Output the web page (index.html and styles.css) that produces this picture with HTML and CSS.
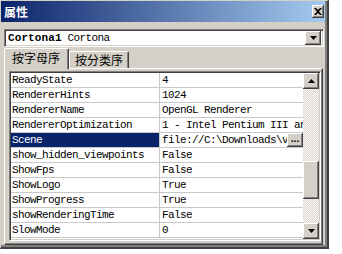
FILE: index.html
```html
<!DOCTYPE html>
<html>
<head>
<meta charset="utf-8">
<link rel="stylesheet" href="styles.css">
</head>
<body>
<div class="window">
  <div class="titlebar">
    <span class="title">属性</span>
    <span class="close"><svg width="8" height="7" viewBox="0 0 8 7"><path d="M0 0h2l2 2 2-2h2L5 3.5 8 7H6L4 5 2 7H0l3-3.5z" fill="#000"/></svg></span>
  </div>
  <div class="combo">
    <span class="combo-text"><b>Cortona1</b> Cortona</span>
    <span class="btn3d combo-btn"><svg width="7" height="4" viewBox="0 0 7 4"><path d="M0 0h7L3.5 4z" fill="#000"/></svg></span>
  </div>
  <div class="tabs">
    <div class="tab active">按字母序</div>
    <div class="tab">按分类序</div>
  </div>
  <div class="tabpage">
    <div class="grid">
      <div class="rows">
        <div class="row"><div class="name">ReadyState</div><div class="value">4</div></div>
        <div class="row"><div class="name">RendererHints</div><div class="value">1024</div></div>
        <div class="row"><div class="name">RendererName</div><div class="value">OpenGL Renderer</div></div>
        <div class="row"><div class="name">RendererOptimization</div><div class="value">1 - Intel Pentium III and above</div></div>
        <div class="row selected"><div class="name">Scene</div><div class="value"><span class="vtext">file://C:\Downloads\vrml\scene.wrl</span><span class="btn3d dots">...</span></div></div>
        <div class="row"><div class="name">show_hidden_viewpoints</div><div class="value">False</div></div>
        <div class="row"><div class="name">ShowFps</div><div class="value">False</div></div>
        <div class="row"><div class="name">ShowLogo</div><div class="value">True</div></div>
        <div class="row"><div class="name">ShowProgress</div><div class="value">True</div></div>
        <div class="row"><div class="name">showRenderingTime</div><div class="value">False</div></div>
        <div class="row"><div class="name">SlowMode</div><div class="value">0</div></div>
      </div>
      <div class="scrollbar">
        <span class="btn3d sbtn"><svg width="7" height="4" viewBox="0 0 7 4"><path d="M0 4h7L3.5 0z" fill="#000"/></svg></span>
        <div class="track"><div class="btn3d thumb"></div></div>
        <span class="btn3d sbtn"><svg width="7" height="4" viewBox="0 0 7 4"><path d="M0 0h7L3.5 4z" fill="#000"/></svg></span>
      </div>
    </div>
  </div>
</div>
</body>
</html>
```

FILE: styles.css
```css
html, body {
  margin: 0;
  padding: 0;
  background: #ffffff;
}
.window {
  box-sizing: border-box;
  width: 329px;
  height: 249px;
  background: #d4d0c8;
  border-top: 1px solid #d4d0c8;
  border-left: 1px solid #d4d0c8;
  border-right: 2px solid #404040;
  border-bottom: 2px solid #404040;
  box-shadow: inset -2px -2px #808080;
  display: flex;
  flex-direction: column;
}
.titlebar {
  height: 21px;
  margin-right: 2px;
  background: linear-gradient(to right, #0a246a, #a6caf0);
  display: flex;
  align-items: center;
  justify-content: space-between;
}
.title {
  color: #fff;
  font: bold 12px "Noto Sans CJK SC", sans-serif;
  padding-left: 3px;
  line-height: 21px;
}
.close {
  box-sizing: border-box;
  width: 12px;
  height: 13px;
  margin-right: 1px;
  background: #d4d0c8;
  box-shadow: inset -1px -1px #404040, inset 1px 1px #fff, inset -2px -2px #808080;
  display: flex;
  align-items: center;
  justify-content: center;
}
.combo {
  box-sizing: border-box;
  height: 18px;
  margin: 7px 3px 0 3px;
  background: #fff;
  border-top: 1px solid #808080;
  border-left: 1px solid #808080;
  border-right: 1px solid #fff;
  border-bottom: 1px solid #fff;
  box-shadow: inset 1px 1px #404040, inset -1px -1px #d4d0c8;
  display: flex;
  align-items: center;
  justify-content: space-between;
  padding: 2px 2px 2px 3px;
}
.combo-text {
  font: 11px "Liberation Mono", monospace;
  letter-spacing: -0.6px;
  color: #000;
  white-space: pre;
}
.combo-text b {
  letter-spacing: 0.1px;
}
.btn3d {
  box-sizing: border-box;
  background: #d4d0c8;
  box-shadow: inset -1px -1px #404040, inset 1px 1px #fff, inset -2px -2px #808080;
  display: flex;
  align-items: center;
  justify-content: center;
}
.combo-btn {
  width: 16px;
  height: 14px;
}
.tabs {
  height: 20px;
  margin: 1px 0 0 3px;
  display: flex;
  align-items: flex-end;
}
.tab {
  box-sizing: border-box;
  height: 17px;
  padding: 0 5px;
  font: 12px "Noto Sans CJK SC", sans-serif;
  line-height: 15px;
  color: #000;
  border-top: 1px solid #fff;
  border-left: 1px solid #fff;
  border-right: 1px solid #404040;
  box-shadow: inset -1px 0 #808080;
  border-radius: 2px 2px 0 0;
}
.tab.active {
  height: 20px;
  padding: 1px 8px 0 7px;
  line-height: 16px;
  position: relative;
  z-index: 1;
  background: #d4d0c8;
  margin-bottom: -1px;
  height: 21px;
}
.tabpage {
  box-sizing: border-box;
  height: 177px;
  margin: 0 4px 0 3px;
  border-top: 1px solid #fff;
  border-left: 1px solid #fff;
  border-right: 1px solid #404040;
  border-bottom: 1px solid #404040;
  box-shadow: inset -1px -1px #808080;
  padding: 2px 1px 0 4px;
}
.grid {
  box-sizing: border-box;
  height: 170px;
  background: #fff;
  border-top: 1px solid #808080;
  border-left: 1px solid #808080;
  border-right: 1px solid #fff;
  border-bottom: 1px solid #fff;
  box-shadow: inset 1px 1px #404040, inset -1px -1px #d4d0c8;
  padding: 1px 1px 1px 1px;
  display: flex;
}
.rows {
  flex: 1;
  display: flex;
  flex-direction: column;
  overflow: hidden;
}
.row {
  box-sizing: border-box;
  height: 15px;
  border-bottom: 1px solid #c8c8c8;
  display: flex;
  font: 11px "Liberation Mono", monospace;
  letter-spacing: -0.6px;
  line-height: 14px;
  color: #000;
  white-space: pre;
}
.name {
  box-sizing: border-box;
  width: 149px;
  border-right: 1px solid #c8c8c8;
  padding-left: 1px;
  overflow: hidden;
}
.value {
  flex: 1;
  padding-left: 2px;
  overflow: hidden;
  display: flex;
}
.selected .name {
  background: #0a246a;
  color: #fff;
}
.vtext {
  flex: 1;
  overflow: hidden;
}
.dots {
  width: 16px;
  height: 14px;
  font: bold 10px "Liberation Sans", sans-serif;
  letter-spacing: 0;
  line-height: 10px;
  align-items: flex-end;
  padding-bottom: 3px;
}
.scrollbar {
  width: 16px;
  display: flex;
  flex-direction: column;
}
.sbtn {
  width: 16px;
  height: 16px;
}
.track {
  flex: 1;
  background: repeating-conic-gradient(#d4d0c8 0 25%, #ffffff 0 50%) 0 0 / 2px 2px;
}
.thumb {
  height: 38px;
  margin-top: 72px;
}
```
